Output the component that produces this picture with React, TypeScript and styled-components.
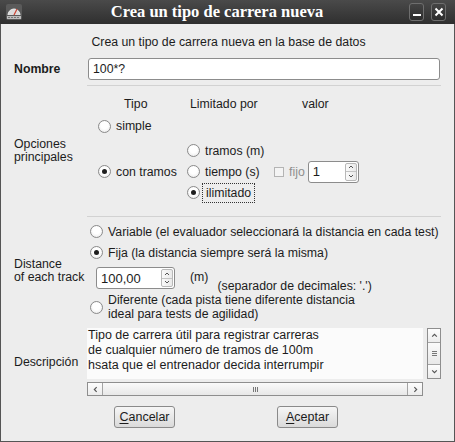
import React from 'react';
import styled, { createGlobalStyle } from 'styled-components';

const Global = createGlobalStyle`
  html, body { margin: 0; padding: 0; background: #ededed; }
  body { font-family: "Liberation Sans", Arial, sans-serif; font-size: 12.3px; color: #1c1c1c; }
  * { box-sizing: border-box; }
`;

const Window = styled.div`
  width: 455px;
  height: 442px;
  display: flex;
  flex-direction: column;
  background: #ededed;
  overflow: hidden;
`;

const TitleBar = styled.div`
  height: 24px;
  flex: none;
  background: linear-gradient(#4a4a4a, #2f2f2f);
  display: flex;
  align-items: center;
  padding: 0 9px 0 5px;
`;

const TitleText = styled.div`
  flex: 1;
  text-align: center;
  color: #ffffff;
  font-family: "Liberation Serif", "Times New Roman", serif;
  font-weight: bold;
  font-size: 16.5px;
  padding-left: 2px;
`;

const TitleButtons = styled.div`
  display: flex;
  gap: 7px;
`;

const TitleButton = styled.div`
  width: 15px;
  height: 18px;
  border: 1px solid #6e6e6e;
  border-radius: 3px;
  background: linear-gradient(#444, #2c2c2c);
  display: flex;
  align-items: center;
  justify-content: center;
`;

const Body = styled.div`
  flex: 1;
  border-left: 1px solid #555;
  border-right: 1px solid #555;
  border-bottom: 1px solid #555;
  padding: 0 13px;
  display: flex;
  flex-direction: column;
`;

const Subtitle = styled.div`
  margin-top: 11px;
  line-height: 15px;
  text-align: center;
  padding-left: 2px;
`;

const Row = styled.div<{ $mt: number; $align?: string }>`
  display: grid;
  grid-template-columns: 74px 1fr;
  align-items: ${(p) => p.$align || 'center'};
  margin-top: ${(p) => p.$mt}px;
`;

const Label = styled.div<{ $bold?: boolean; $pt?: number }>`
  font-weight: ${(p) => (p.$bold ? 'bold' : 'normal')};
  line-height: 13px;
  padding-top: ${(p) => p.$pt || 0}px;
  white-space: nowrap;
`;

const TextInput = styled.div`
  height: 22px;
  border: 1px solid #8c8c8c;
  border-radius: 3px;
  background: #ffffff;
  display: flex;
  align-items: center;
  padding-left: 4px;
  margin-right: 1px;
`;

const Separator = styled.div<{ $mt: number }>`
  height: 1px;
  background: #d2d2d2;
  margin-left: 73px;
  margin-top: ${(p) => p.$mt}px;
`;

const OptionsGrid = styled.div`
  display: grid;
  grid-template-columns: 89px 87px 1fr;
  grid-template-rows: 20px 24px 2px 21px 21px 21px;
  padding-left: 10px;
  align-items: center;
`;

const Header = styled.div<{ $ml: number; $col: number }>`
  grid-row: 1;
  grid-column: ${(p) => p.$col};
  margin-left: ${(p) => p.$ml}px;
`;

const Cell = styled.div<{ $row: string; $col: number }>`
  grid-row: ${(p) => p.$row};
  grid-column: ${(p) => p.$col};
  display: flex;
  align-items: center;
`;

const RadioWrap = styled.div<{ $gap?: number }>`
  display: flex;
  align-items: center;
  gap: ${(p) => p.$gap ?? 5}px;
  white-space: nowrap;
`;

const RadioCircle = styled.div<{ $checked?: boolean }>`
  width: 13px;
  height: 13px;
  flex: none;
  border-radius: 50%;
  border: 1px solid #8a8a8a;
  background: radial-gradient(circle at 50% 40%, #ffffff 40%, #e4e4e4 100%);
  display: flex;
  align-items: center;
  justify-content: center;
  &::after {
    content: '';
    width: 5px;
    height: 5px;
    border-radius: 50%;
    background: ${(p) => (p.$checked ? '#1e1e1e' : 'transparent')};
  }
`;

const Focus = styled.span`
  outline: 1px dotted #333;
  outline-offset: 2px;
  padding: 0 1px;
`;

const Radio: React.FC<{ checked?: boolean; focus?: boolean; gap?: number; children: React.ReactNode }> = ({
  checked,
  focus,
  gap,
  children,
}) => (
  <RadioWrap $gap={gap}>
    <RadioCircle $checked={checked} />
    {focus ? <Focus>{children}</Focus> : <span>{children}</span>}
  </RadioWrap>
);

const CheckBox = styled.div`
  width: 10px;
  height: 10px;
  border: 1px solid #b4b4b4;
  background: #f4f4f4;
  margin-right: 5px;
`;

const Disabled = styled.span`
  color: #8f8f8f;
  margin-right: 3px;
`;

const SpinBox = styled.div<{ $w: number }>`
  width: ${(p) => p.$w}px;
  height: 22px;
  border: 1px solid #8c8c8c;
  border-radius: 3px;
  background: #ffffff;
  display: flex;
  align-items: stretch;
`;

const SpinText = styled.div`
  flex: 1;
  display: flex;
  align-items: center;
  padding-left: 4px;
  font-size: 13px;
`;

const SpinButtons = styled.div`
  width: 12px;
  margin: 1px 1px 1px 0;
  border: 1px solid #b8b8b8;
  border-radius: 2px;
  display: flex;
  flex-direction: column;
  background: linear-gradient(90deg, #fafafa, #e9e9e9);
`;

const SpinHalf = styled.div<{ $top?: boolean }>`
  flex: 1;
  display: flex;
  align-items: center;
  justify-content: center;
  border-top: ${(p) => (p.$top ? 'none' : '1px solid #c4c4c4')};
`;

const Chevron: React.FC<{ dir: 'up' | 'down' | 'left' | 'right'; size?: number }> = ({ dir, size = 6 }) => {
  const paths: Record<string, string> = {
    up: 'M1 4 L3 2 L5 4',
    down: 'M1 2 L3 4 L5 2',
    left: 'M4 1 L2 3 L4 5',
    right: 'M2 1 L4 3 L2 5',
  };
  return (
    <svg width={size} height={size} viewBox="0 0 6 6">
      <path d={paths[dir]} fill="none" stroke="#555" strokeWidth="1" />
    </svg>
  );
};

const Spinner: React.FC<{ value: string; width: number }> = ({ value, width }) => (
  <SpinBox $w={width}>
    <SpinText>{value}</SpinText>
    <SpinButtons>
      <SpinHalf $top>
        <Chevron dir="up" size={6} />
      </SpinHalf>
      <SpinHalf>
        <Chevron dir="down" size={6} />
      </SpinHalf>
    </SpinButtons>
  </SpinBox>
);

const DistanceCol = styled.div`
  display: flex;
  flex-direction: column;
  padding-left: 2px;
`;

const LineRow = styled.div<{ $h: number; $mt?: number }>`
  height: ${(p) => p.$h}px;
  margin-top: ${(p) => p.$mt || 0}px;
  display: flex;
  align-items: center;
`;

const SpinRow = styled.div`
  display: flex;
  align-items: flex-start;
  margin-top: 4px;
  margin-left: 6px;
  height: 22px;
`;

const Unit = styled.span`
  margin-left: 15px;
  margin-top: 3px;
`;

const Note = styled.span`
  margin-left: 9px;
  margin-top: 12px;
`;

const TwoLine = styled.div`
  line-height: 14px;
`;

const DescArea = styled.div`
  display: grid;
  grid-template-columns: 336px 14px;
  grid-template-rows: 51px 14px;
  column-gap: 4px;
  row-gap: 3px;
  margin-left: -1px;
`;

const TextArea = styled.div`
  background: #fbfbfb;
  line-height: 15px;
  padding: 0 0 0 1px;
  white-space: pre;
  overflow: hidden;
  font-size: 12.5px;
`;

const ScrollBar = styled.div<{ $vertical?: boolean }>`
  border: 1px solid #8e8e8e;
  display: flex;
  flex-direction: ${(p) => (p.$vertical ? 'column' : 'row')};
  background: #f1f1f1;
`;

const ScrollBtn = styled.div<{ $vertical?: boolean }>`
  flex: none;
  width: ${(p) => (p.$vertical ? '100%' : '14px')};
  height: ${(p) => (p.$vertical ? '13px' : '100%')};
  display: flex;
  align-items: center;
  justify-content: center;
  background: linear-gradient(#fdfdfd, #ececec);
`;

const Thumb = styled.div<{ $vertical?: boolean }>`
  flex: 1;
  display: flex;
  align-items: center;
  justify-content: center;
  background: linear-gradient(#fafafa, #e8e8e8);
  border-${(p) => (p.$vertical ? 'top' : 'left')}: 1px solid #a4a4a4;
  border-${(p) => (p.$vertical ? 'bottom' : 'right')}: 1px solid #a4a4a4;
`;

const Buttons = styled.div`
  display: flex;
  margin-top: 10px;
  padding-left: 100px;
  gap: 102px;
`;

const Button = styled.div`
  width: 61px;
  height: 22px;
  border: 1px solid #8a8a8a;
  border-radius: 3px;
  background: linear-gradient(#f6f6f6, #dadada);
  display: flex;
  align-items: center;
  justify-content: center;
  font-size: 12.5px;
  & u { text-underline-offset: 2px; }
`;

const AppIcon = () => (
  <svg width="18" height="18" viewBox="0 0 18 18">
    <rect x="1" y="1" width="16" height="16" rx="2" fill="#5a5a5a" />
    <path d="M3 12 A6 6 0 0 1 15 12" fill="#dcdcdc" stroke="#eee" strokeWidth="1" />
    <path d="M9 12 L12 6" stroke="#c43" strokeWidth="1.3" />
    <rect x="2" y="13" width="14" height="3" fill="#bcbcbc" />
    <path d="M3 14.5 H15" stroke="#777" strokeWidth="1" strokeDasharray="2 1" />
  </svg>
);

export default function App() {
  return (
    <>
      <Global />
      <Window>
        <TitleBar>
          <AppIcon />
          <TitleText>Crea un tipo de carrera nueva</TitleText>
          <TitleButtons>
            <TitleButton>
              <svg width="10" height="10" viewBox="0 0 10 10">
                <rect x="1" y="7" width="8" height="2" fill="#fff" />
              </svg>
            </TitleButton>
            <TitleButton>
              <svg width="10" height="10" viewBox="0 0 10 10">
                <path d="M1.5 1.5 L8.5 8.5 M8.5 1.5 L1.5 8.5" stroke="#fff" strokeWidth="2" />
              </svg>
            </TitleButton>
          </TitleButtons>
        </TitleBar>
        <Body>
          <Subtitle>Crea un tipo de carrera nueva en la base de datos</Subtitle>
          <Row $mt={8}>
            <Label $bold>Nombre</Label>
            <TextInput>100*?</TextInput>
          </Row>
          <Separator $mt={5} />
          <Row $mt={8}>
            <Label $pt={5}>
              Opciones
              <br />
              principales
            </Label>
            <OptionsGrid>
              <Header $col={1} $ml={26}>Tipo</Header>
              <Header $col={2} $ml={3}>Limitado por</Header>
              <Header $col={3} $ml={28}>valor</Header>
              <Cell $row="2" $col={1}>
                <Radio>simple</Radio>
              </Cell>
              <Cell $row="4 / 7" $col={1}>
                <Radio checked>con tramos</Radio>
              </Cell>
              <Cell $row="4" $col={2}>
                <Radio>tramos (m)</Radio>
              </Cell>
              <Cell $row="5" $col={2}>
                <Radio>tiempo (s)</Radio>
              </Cell>
              <Cell $row="6" $col={2}>
                <Radio checked focus>ilimitado</Radio>
              </Cell>
              <Cell $row="5" $col={3}>
                <CheckBox />
                <Disabled>fijo</Disabled>
                <Spinner value="1" width={51} />
              </Cell>
            </OptionsGrid>
          </Row>
          <Separator $mt={13} />
          <Row $mt={4}>
            <Label $pt={0}>
              Distance
              <br />
              of each track
            </Label>
            <DistanceCol>
              <LineRow $h={21}>
                <Radio>Variable (el evaluador seleccionará la distancia en cada test)</Radio>
              </LineRow>
              <LineRow $h={21}>
                <Radio checked>Fija (la distancia siempre será la misma)</Radio>
              </LineRow>
              <SpinRow>
                <Spinner value="100,00" width={79} />
                <Unit>(m)</Unit>
                <Note>(separador de decimales: '.')</Note>
              </SpinRow>
              <LineRow $h={28} $mt={4}>
                <Radio>
                  <TwoLine>
                    Diferente (cada pista tiene diferente distancia
                    <br />
                    ideal para tests de agilidad)
                  </TwoLine>
                </Radio>
              </LineRow>
            </DistanceCol>
          </Row>
          <Row $mt={7}>
            <Label>Descripción</Label>
            <DescArea>
              <TextArea>
                {'Tipo de carrera útil para registrar carreras\nde cualquier número de tramos de 100m\nhsata que el entrenador decida interrumpir'}
              </TextArea>
              <ScrollBar $vertical>
                <ScrollBtn $vertical>
                  <Chevron dir="up" size={7} />
                </ScrollBtn>
                <Thumb $vertical>
                  <svg width="7" height="7" viewBox="0 0 7 7">
                    <path d="M1 1.5 H6 M1 3.5 H6 M1 5.5 H6" stroke="#777" strokeWidth="1" />
                  </svg>
                </Thumb>
                <ScrollBtn $vertical>
                  <Chevron dir="down" size={7} />
                </ScrollBtn>
              </ScrollBar>
              <ScrollBar>
                <ScrollBtn>
                  <Chevron dir="left" size={7} />
                </ScrollBtn>
                <Thumb>
                  <svg width="7" height="7" viewBox="0 0 7 7">
                    <path d="M1.5 1 V6 M3.5 1 V6 M5.5 1 V6" stroke="#777" strokeWidth="1" />
                  </svg>
                </Thumb>
                <ScrollBtn>
                  <Chevron dir="right" size={7} />
                </ScrollBtn>
              </ScrollBar>
            </DescArea>
          </Row>
          <Buttons>
            <Button>
              <span>
                <u>C</u>ancelar
              </span>
            </Button>
            <Button>
              <span>
                <u>A</u>ceptar
              </span>
            </Button>
          </Buttons>
        </Body>
      </Window>
    </>
  );
}
